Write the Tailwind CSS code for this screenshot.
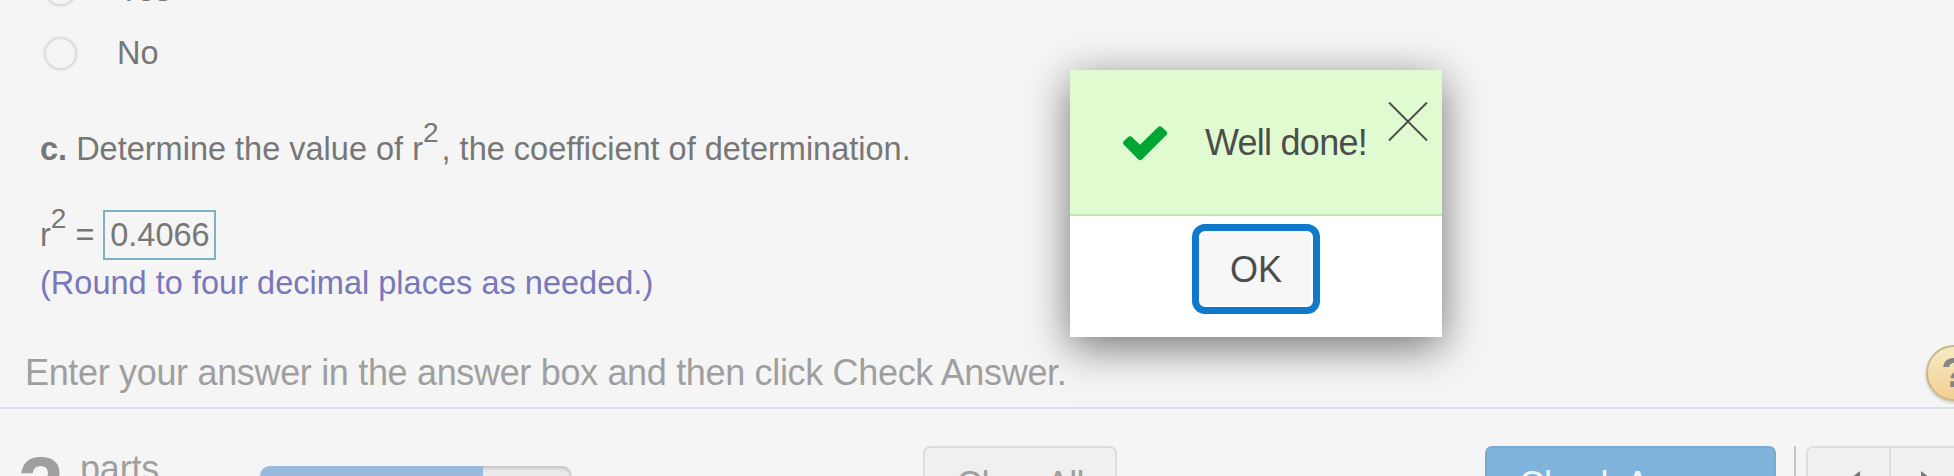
<!DOCTYPE html>
<html lang="en"><head><meta charset="utf-8"><title>Exercise</title>
<script src="https://cdn.jsdelivr.net/npm/@tailwindcss/browser@4"></script></head>
<body class="relative h-[476px] w-[1954px] overflow-hidden bg-[#f5f5f5] font-['Liberation_Sans',Arial,sans-serif] text-[#777777]">
<main class="flex h-[409px] flex-col border-b-2 border-[#d9dfe5] text-[32.5px] leading-[40px] whitespace-nowrap">
  <div class="-mt-[27px] flex h-[60px] items-start pl-[44px]"><span class="size-[33px] rounded-full border-2 border-[#dedede] shadow-[0_0_2px_#ccc]"></span><span class="-mt-[3px] ml-[41px]">Yes</span></div>
  <div class="flex h-[96px] items-start pt-[3px] pl-[44px]"><span class="mt-px size-[33px] rounded-full border-2 border-[#dedede] shadow-[0_0_2px_#ccc]"></span><span class="-mt-[3px] ml-[40px]">No</span></div>
  <p class="h-[81px] pl-[40px]"><b>c.</b> Determine the value of r<sup class="relative -top-[18px] mr-[3px] align-baseline text-[28px] leading-none">2</sup>, the coefficient of determination.</p>
  <div class="flex h-[50px] items-center pl-[40px]"><span>r<sup class="relative -top-[18px] align-baseline text-[28px] leading-none">2</sup> =</span><span class="ml-[9px] flex h-[50px] w-[113px] items-center justify-center border-2 border-[#78b4c6]">0.4066</span></div>
  <p class="mt-[3px] h-[87px] pl-[40px] tracking-[0.02px] text-[#7878ba]">(Round to four decimal places as needed.)</p>
  <div class="flex justify-between pl-[25px] text-[36px] text-[#9f9f9f]"><p class="mt-[3px] tracking-[-0.33px]">Enter your answer in the answer box and then click Check Answer.</p>
    <span class="-mt-[5px] -mr-[28px] flex size-[56px] shrink-0 items-center justify-center rounded-full border-2 border-[#ccb68c] bg-linear-to-b from-[#f6ebc5] to-[#f2cf92] text-[42px] font-bold text-[#858585] shadow-[0_2px_3px_#0003]">?</span></div>
</main>
<footer class="flex h-[67px] items-start overflow-hidden text-[36px] leading-[40px] whitespace-nowrap text-[#9f9f9f] *:shrink-0">
  <span class="mt-[37px] ml-[18px] w-[62px] text-[82px] leading-[80px] font-bold">2</span><span class="mt-[40px] w-[180px] tracking-[-0.2px]">parts</span>
  <span class="mt-[57px] flex h-[30px] w-[312px] overflow-hidden rounded-[10px] bg-[#ebebeb] shadow-[inset_0_2px_4px_#0003]"><i class="w-[223px] bg-[#98bbdd]"></i></span>
  <span class="mt-[37px] ml-[351px] h-[80px] w-[194px] rounded-[7px] border-2 border-[#dedede] bg-[#f0f0f0] pt-[17px] text-center tracking-[-0.7px]">Clear All</span>
  <span class="mt-[37px] ml-[368px] h-[80px] w-[291px] rounded-[7px] border-2 border-[#79abd0] bg-[#7fb3dc] pt-[17px] text-center tracking-[-0.5px] text-[#f0f5fa]">Check Answer</span>
  <span class="mt-[37px] ml-[18px] h-[60px] w-[2px] bg-[#c6c6c6]"></span>
  <span class="mt-[37px] ml-[10px] flex h-[80px] w-[170px] rounded-l-[7px] border-2 border-[#dedede] bg-[#f0f0f0]"><span class="w-[83px] border-r-2 border-[#dedede] pt-[23px] pl-[39px]"><svg width="13" height="20" fill="#777"><path d="M13 0V20L0 10Z"/></svg></span><span class="pt-[23px] pl-[30px]"><svg width="13" height="20" fill="#777"><path d="M0 0V20L13 10Z"/></svg></span></span>
</footer>
<section class="absolute top-[70px] left-[1070px] flex h-[267px] w-[372px] flex-col items-center bg-white text-[36px] text-[#4d4d4d] shadow-[0_10px_40px_#0008]">
  <header class="flex h-[146px] w-full items-center border-b-2 border-[#c5e6ae] bg-[#e1fbd0] whitespace-nowrap">
    <svg class="mt-[2px] ml-[53px]" width="45" height="35" viewBox="0 0 45 35"><path d="M3.2 17 7 13.3 17 23 37 3.5 41 7.2 17 31Z" fill="#00a632" stroke="#00a632" stroke-width="6" stroke-linejoin="round"/></svg>
    <span class="mt-[2px] ml-[37px] tracking-[-0.75px]">Well done!</span>
    <svg class="-mt-[41px] ml-[21px] shrink-0" width="40" height="39" viewBox="0 0 40 39"><path d="M1 .5 39 38.5M39 .5 1 38.5" stroke="#4d4d4d" stroke-width="2"/></svg>
  </header>
  <button class="mt-[8px] h-[90px] w-[128px] rounded-[13px] border-[7px] border-[#0f7acb] bg-[#f7f7f7] pt-[2px] shadow-[inset_0_0_0_2px_#fff]">OK</button>
</section>
</body></html>
